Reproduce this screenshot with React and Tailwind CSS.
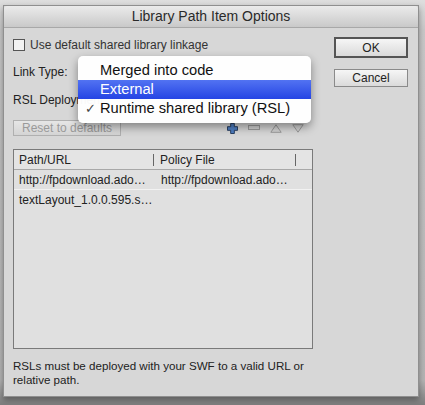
import React from "react";

function Plus() {
  return (
    <svg width="11" height="11" viewBox="0 0 12 12">
      <path d="M4 0.5h4v3.5h3.5v4H8v3.5H4V8H0.5V4H4z" fill="#4f7fc4" stroke="#1e3458" strokeWidth="1" />
    </svg>
  );
}
function Minus() {
  return (
    <svg width="12" height="6" viewBox="0 0 12 6">
      <rect x="0.5" y="0.5" width="11" height="4" fill="#d0d0d0" stroke="#9a9a9a" />
    </svg>
  );
}
function Up() {
  return (
    <svg width="12" height="9" viewBox="0 0 12 9">
      <path d="M6 0.8L11.2 8.3H0.8z" fill="#d2d2d2" stroke="#9a9a9a" strokeWidth="1" />
    </svg>
  );
}
function Down() {
  return (
    <svg width="12" height="9" viewBox="0 0 12 9">
      <path d="M0.8 0.7H11.2L6 8.2z" fill="#d2d2d2" stroke="#9a9a9a" strokeWidth="1" />
    </svg>
  );
}

export default function App() {
  const font = { fontFamily: '"Liberation Sans", Arial, sans-serif' };
  return (
    <div className="w-[425px] h-[405px] overflow-hidden bg-[linear-gradient(#dedede_0px,#c8c8c8_30px,#b4b4b4_380px,#8c8c8c_398px,#7e7e7e_405px)] flex flex-col" style={font}>
      <div className="ml-[3px] mt-[5px] w-[416px] h-[392px] bg-[#d7d7d7] border border-[#8f8f8f] flex flex-col shadow-[0_3px_6px_rgba(0,0,0,0.35)]">
        <div className="h-[22px] shrink-0 bg-[linear-gradient(#ebebeb,#c9c9c9)] border-b border-[#a8a8a8] flex items-center justify-center text-[14px] text-[#2a2a2a] rounded-t-[3px]">
          Library Path Item Options
        </div>
        <div className="relative flex-1 flex pl-[9px] pr-[10px]">
          <div className="w-[300px] flex flex-col">
            <div className="mt-[11px] h-[12px] flex items-center gap-[5px] text-[12px] text-[#333]">
              <div className="w-[12px] h-[12px] border border-[#555] bg-[#f2f2f2]" />
              <span className="leading-none">Use default shared library linkage</span>
            </div>
            <div className="mt-[13px] h-[16px] flex items-center text-[12px] text-[#222]">Link Type:</div>
            <div className="mt-[12px] h-[16px] flex items-center text-[12px] text-[#222]">RSL Deployment:</div>
            <div className="mt-[12px] flex items-center">
              <div className="w-[108px] h-[16px] border border-[#b0b0b0] bg-[linear-gradient(#e6e6e6,#d4d4d4)] flex items-center justify-center text-[12px] text-[#9a9a9a]">
                Reset to defaults
              </div>
              <div className="ml-[106px] flex items-center gap-[10px]">
                <Plus />
                <Minus />
                <Up />
                <Down />
              </div>
            </div>
            <div className="mt-[13px] h-[200px] border border-[#7a7a7a] bg-[#e0e0e0] flex flex-col text-[12px] text-[#222]">
              <div className="h-[20px] flex items-center border-b border-[#a8a8a8] bg-[#e4e4e4]">
                <div className="w-[140px] pl-[5px] border-r border-[#666] leading-[12px]">Path/URL</div>
                <div className="w-[142px] pl-[6px] border-r border-[#666] leading-[12px]">Policy File</div>
              </div>
              <div className="h-[20px] flex items-center border-b border-[#f2f2f2]">
                <div className="w-[142px] pl-[5px] whitespace-nowrap">http://fpdownload.ado…</div>
                <div className="pl-[5px] whitespace-nowrap">http://fpdownload.ado…</div>
              </div>
              <div className="h-[20px] flex items-center">
                <div className="pl-[5px] whitespace-nowrap">textLayout_1.0.0.595.s…</div>
              </div>
            </div>
            <div className="mt-[10px] text-[11.6px] leading-[14px] text-[#222]">
              RSLs must be deployed with your SWF to a valid URL or
              <br />
              relative path.
            </div>
          </div>
          <div className="ml-auto mt-[9px] flex flex-col gap-[11px] w-[74px]">
            <div className="h-[21px] border-2 border-[#555] bg-[linear-gradient(#f6f6f6,#dadada)] flex items-center justify-center text-[12px] text-[#222]">OK</div>
            <div className="h-[18px] border border-[#8a8a8a] bg-[linear-gradient(#f6f6f6,#dadada)] flex items-center justify-center text-[12px] text-[#222]">Cancel</div>
          </div>
          <div className="absolute left-[74px] top-[28px] w-[233px] pt-[5px] pb-[5px] rounded-[5px] bg-[rgba(255,255,255,0.97)] shadow-[0_4px_10px_rgba(0,0,0,0.4)] text-[14.7px] text-[#111] flex flex-col">
            <div className="h-[19px] flex items-center pl-[22px]">Merged into code</div>
            <div className="h-[19px] flex items-center pl-[22px] text-white bg-[linear-gradient(#5273f2,#2544e4)]">External</div>
            <div className="h-[19px] flex items-center pl-[7px]">
              <span className="w-[15px] text-[13px] text-[#444]">✓</span>
              Runtime shared library (RSL)
            </div>
          </div>
        </div>
      </div>
    </div>
  );
}
